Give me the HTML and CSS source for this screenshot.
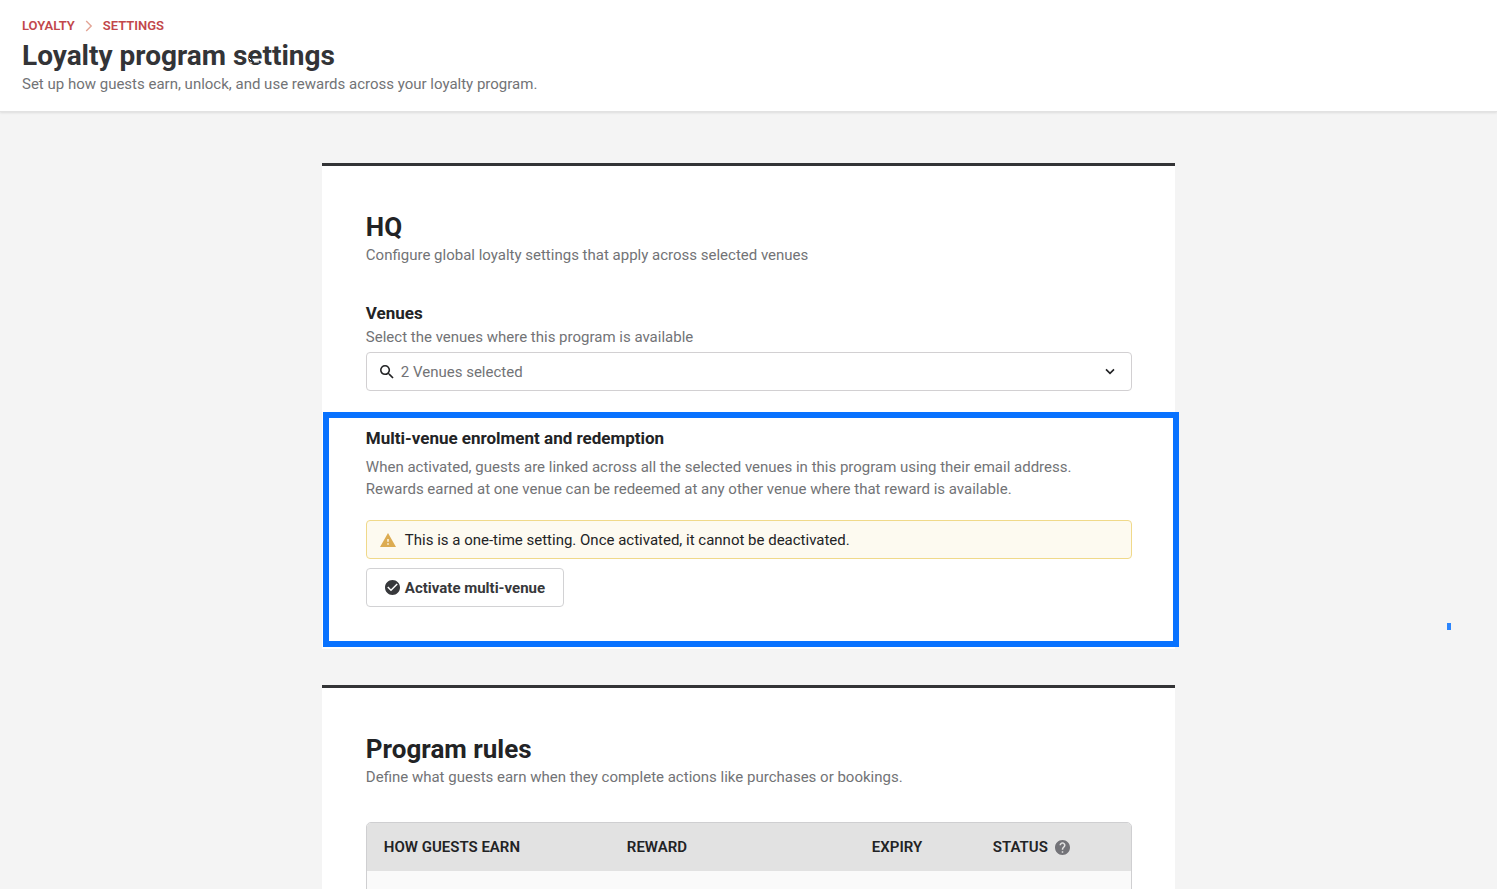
FILE: index.html
```html
<!DOCTYPE html>
<html lang="en">
<head>
<meta charset="utf-8">
<meta name="viewport" content="width=device-width, initial-scale=1">
<title>Loyalty program settings</title>
<link rel="stylesheet" href="styles.css">
</head>
<body>
<header class="page-header">
  <nav class="breadcrumb" aria-label="Breadcrumb">
    <a href="#">LOYALTY</a>
    <svg class="breadcrumb-sep" viewBox="0 0 8 12" aria-hidden="true"><path d="M1.2 1l5 5-5 5"/></svg>
    <a href="#">SETTINGS</a>
  </nav>
  <h1 class="page-title">Loyalty program settings</h1>
  <p class="text">Set up how guests earn, unlock, and use rewards across your loyalty program.</p>
  <svg class="cursor" viewBox="0 0 12 12" aria-hidden="true"><path d="M1 4l2 2M2 8l2 1M6 8h5"/></svg>
</header>
<main class="content">
  <section class="card">
    <h2 class="card-title">HQ</h2>
    <p class="text">Configure global loyalty settings that apply across selected venues</p>
    <div class="field">
      <label class="heading" for="venues">Venues</label>
      <p class="text" id="venues-hint">Select the venues where this program is available</p>
      <div class="select-box">
        <svg class="search-icon" viewBox="3 3 18 18" aria-hidden="true"><path d="M15.5 14h-.79l-.28-.27A6.47 6.47 0 0 0 16 9.5 6.5 6.5 0 1 0 9.5 16c1.61 0 3.09-.59 4.23-1.57l.27.28v.79l5 4.99L20.49 19l-4.99-5zm-6 0C7.01 14 5 11.99 5 9.5S7.01 5 9.5 5 14 7.01 14 9.5 11.99 14 9.5 14z"/></svg>
        <select class="select" id="venues" aria-describedby="venues-hint"><option>2 Venues selected</option></select>
        <svg class="chevron" viewBox="0 0 10 7" aria-hidden="true"><path d="M1 1.400L5 5.400l4-4"/></svg>
      </div>
    </div>
    <section class="multi-venue">
      <h3 class="heading">Multi-venue enrolment and redemption</h3>
      <p class="description">When activated, guests are linked across all the selected venues in this program using their email address. Rewards earned at one venue can be redeemed at any other venue where that reward is available.</p>
      <div class="notice">
        <svg class="notice-icon" viewBox="1 2 22 19" aria-hidden="true"><path d="M1 21h22L12 2 1 21zm12-3h-2v-2h2v2zm0-4h-2v-4h2v4z"/></svg>
        <span>This is a one-time setting. Once activated, it cannot be deactivated.</span>
      </div>
      <button class="button" type="button">
        <svg class="button-icon" viewBox="2 2 20 20" aria-hidden="true"><path d="M12 2C6.480 2 2 6.480 2 12s4.480 10 10 10 10-4.480 10-10S17.520 2 12 2zm-2 15l-5-5 1.410-1.410L10 14.170l7.590-7.590L19 8l-9 9z"/></svg>
        Activate multi-venue
      </button>
      <div class="highlight"></div>
    </section>
  </section>
  <section class="card">
    <h2 class="card-title">Program rules</h2>
    <p class="text">Define what guests earn when they complete actions like purchases or bookings.</p>
    <div class="table-frame">
      <table class="rules">
        <thead>
          <tr>
            <th class="col-earn" scope="col">HOW GUESTS EARN</th>
            <th class="col-reward" scope="col">REWARD</th>
            <th class="col-expiry" scope="col">EXPIRY</th>
            <th scope="col"><span class="status">STATUS
              <svg class="help-icon" viewBox="2 2 20 20" role="img" aria-label="Help"><path d="M12 2C6.480 2 2 6.480 2 12s4.480 10 10 10 10-4.480 10-10S17.520 2 12 2zm1 17h-2v-2h2v2zm2.070-7.750l-.9.920C13.450 12.900 13 13.500 13 15h-2v-.5c0-1.100.45-2.100 1.170-2.830l1.240-1.260c.37-.36.590-.86.590-1.410 0-1.100-.9-2-2-2s-2 .9-2 2H8c0-2.210 1.790-4 4-4s4 1.790 4 4c0 .88-.36 1.680-.93 2.250z"/></svg></span></th>
          </tr>
        </thead>
        <tbody><tr><td colspan="4"></td></tr></tbody>
      </table>
    </div>
  </section>
</main>
<div class="marker"></div>
</body>
</html>
```
FILE: styles.css
```css
* { box-sizing: border-box; }
body {
  margin: 0;
  background: #f4f4f4;
  color: #222325;
  font-family: Roboto, "Liberation Sans", sans-serif;
  font-size: 15px;
  line-height: 22px;
}
h1, h2, h3, p { margin: 0; }
.page-header {
  position: relative;
  padding: 16px 22px 16px;
  background: #fff;
  border-bottom: 1px solid #e2e2e2;
  box-shadow: 0 1px 2px #dcdcdc;
}
.breadcrumb {
  display: flex;
  align-items: center;
  gap: 10px;
  font-size: 13px;
  line-height: 20px;
  font-weight: 600;
}
.breadcrumb a { color: #c2474b; text-decoration: none; }
.breadcrumb-sep { width: 8px; height: 12px; fill: none; stroke: #e3a596; stroke-width: 1.4; }
.page-title { margin-top: 3px; font-size: 28px; line-height: 34px; font-weight: 700; color: #333437; }
.cursor {
  position: absolute;
  left: 248px;
  top: 54px;
  width: 12px;
  height: 12px;
  fill: none;
  stroke: #fff;
  stroke-width: 1;
}
.text { color: #727376; }
.content {
  width: 57%;
  margin: 51px auto 0;
  display: flex;
  flex-direction: column;
  gap: 36px;
}
.card {
  padding: 44px 43px 42px 44px;
  background: #fff;
  border-top: 3px solid #333436;
}
.card-title { font-size: 26px; line-height: 34px; font-weight: 700; }
.field { margin-top: 35px; }
.heading { display: block; font-size: 17px; line-height: 25px; font-weight: 700; }
.select-box {
  display: flex;
  align-items: center;
  gap: 7px;
  height: 39px;
  margin-top: 4px;
  padding: 0 16px 0 13px;
  border: 1px solid #d2d0d2;
  border-radius: 4px;
}
.search-icon { width: 14px; height: 14px; fill: #222325; }
.select {
  flex: 1;
  appearance: none;
  padding: 0;
  border: 0;
  background: none;
  font: inherit;
  color: #727376;
}
.chevron { width: 10px; height: 7px; fill: none; stroke: #222325; stroke-width: 1.6; }
.multi-venue { position: relative; margin-top: 35px; }
.highlight {
  position: absolute;
  inset: -14px -47px -40px -43px;
  border: 6px solid #0872ff;
  pointer-events: none;
}
.description { margin-top: 5px; padding-right: 40px; color: #727376; }
.notice {
  display: flex;
  align-items: center;
  gap: 9px;
  height: 39px;
  margin-top: 20px;
  padding: 0 13px;
  background: #fdfaf0;
  border: 1px solid #f0d98a;
  border-radius: 4px;
}
.notice-icon { width: 16px; height: 14px; fill: #dcac52; }
.button {
  display: flex;
  align-items: center;
  gap: 5px;
  height: 39px;
  margin-top: 9px;
  padding: 0 18px;
  background: #fff;
  border: 1px solid #d2d2d4;
  border-radius: 4px;
  font: inherit;
  font-weight: 700;
  color: #37383b;
}
.button-icon { width: 15px; height: 15px; fill: #37383b; }
.table-frame {
  margin-top: 34px;
  border: 1px solid #cfcfd1;
  border-radius: 5px;
  overflow: hidden;
}
.rules { width: 100%; border-collapse: collapse; table-layout: fixed; }
.rules th { height: 48px; padding: 0 0 0 17px; background: #e2e2e2; text-align: left; font-weight: 600; }
.rules td { height: 60px; background: #fafafa; }
.col-earn { width: 243px; }
.col-reward { width: 245px; }
.col-expiry { width: 121px; }
.status { display: flex; align-items: center; gap: 7px; }
.help-icon { width: 15px; height: 15px; fill: #737378; }
.marker {
  position: absolute;
  right: 46px;
  top: 623px;
  width: 4px;
  height: 7px;
  background: #2b85fd;
}
```
